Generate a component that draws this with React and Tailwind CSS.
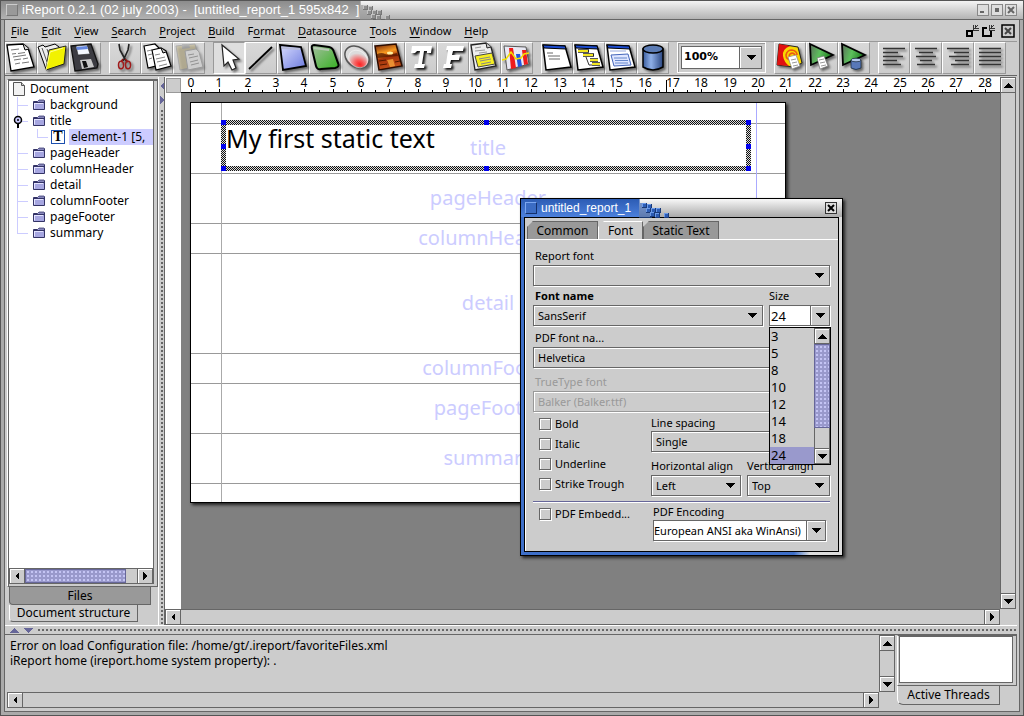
import React from "react";

const raised =
  "border border-[#666666] bg-[#cccccc] shadow-[inset_1px_1px_0_#fff]";
const comboFrame =
  "border border-[#666666] shadow-[1px_1px_0_#fff,inset_1px_1px_0_#fff]";

/* ---------- small glyphs ---------- */

const arrowPoints = {
  up: "0,6 5,1 10,6",
  down: "0,1 10,1 5,6",
};

function Arrow({ dir, fill = "#000" }) {
  if (dir === "left" || dir === "right") {
    return (
      <svg width="6" height="10" viewBox="0 0 6 10" shapeRendering="crispEdges" aria-hidden="true">
        <polygon points={dir === "left" ? "5,1 5,9 1,5" : "1,1 1,9 5,5"} fill={fill} />
      </svg>
    );
  }
  return (
    <svg width="10" height="7" viewBox="0 0 10 7" shapeRendering="crispEdges" aria-hidden="true">
      <polygon points={arrowPoints[dir]} fill={fill} />
    </svg>
  );
}

function ScrollButton({ dir }) {
  return (
    <button type="button" aria-label={"Scroll " + dir} className={"flex size-4 shrink-0 items-center justify-center " + raised}>
      <Arrow dir={dir} />
    </button>
  );
}

function TitleSquares({ light, dark, edge }) {
  return (
    <svg width="32" height="19" viewBox="0 0 32 19" shapeRendering="crispEdges" aria-hidden="true">
      <path d="M0 0h1v4h4v4h4v4h4v7h-13z" fill={dark} opacity="0.6" />
      {[[3, 4], [8, 5], [12, 9], [7, 9], [17, 9], [11, 13], [16, 14], [25, 14]].map(([x, y]) => (
        <g key={x + "-" + y}>
          <rect x={x} y={y} width="5" height="5" fill={edge} />
          <rect x={x} y={y} width="4" height="4" fill={light} />
          <rect x={x + 1} y={y + 1} width="3" height="3" fill={dark} />
        </g>
      ))}
    </svg>
  );
}

/* ---------- toolbar drawings ---------- */

const Lines = ({ d, c = "#555" }) => <path d={d} stroke={c} strokeWidth="1" fill="none" />;

const art = {
  new: (
    <>
      <polygon points="2,3 18,2 23,6 29,25 6,29" fill="#fff" stroke="#000" strokeWidth="1.3" />
      <path d="M18 2l2 6 4-1" fill="#ddd" stroke="#000" />
      <Lines d="M6 8l8-1M7 12l4-.5M13 11.500l7-1M8 15l13-2M9 18l7-1M18 17l5-1M10 22l5-1M17 21l7-1" c="#777" />
    </>
  ),
  open: (
    <>
      <polygon points="1,5 6,3 8,5 18,2 22,5 25,22 9,27" fill="#eee" stroke="#000" />
      <path d="M5 6l5 14M10 7l3 9" stroke="#555" />
      <polygon points="12,8 29,4 27,22 9,28" fill="#f2f200" stroke="#222" />
      <path d="M9 28L13 10l13-4" fill="none" stroke="#ffff90" />
    </>
  ),
  save: (
    <>
      <polygon points="2,4 22,2 29,22 28,26 6,29" fill="#3c3c42" stroke="#111" strokeWidth="1.300" />
      <polygon points="7,4 18,3 21,12 9,13" fill="#f4f8ff" stroke="#222" strokeWidth="0.6" />
      <path d="M7 5l11-1 1 3-11 1z" fill="#6688e0" />
      <polygon points="11,18 22,17 25,25 13,27" fill="#c8c8c8" />
      <polygon points="13,19 17,19 19,25 15,26" fill="#111" />
    </>
  ),
  cut: (
    <>
      <path d="M10 2l1 6 6 11M20 2l-1 6-5 11" stroke="#222" strokeWidth="1.600" fill="none" />
      <path d="M14 17l-2 3M16 17l3 3" stroke="#8f1515" strokeWidth="1.600" />
      <ellipse cx="12" cy="23" rx="2.500" ry="3.800" fill="none" stroke="#a01a1a" strokeWidth="1.500" />
      <ellipse cx="19" cy="23" rx="2.500" ry="3.800" fill="none" stroke="#a01a1a" strokeWidth="1.500" />
    </>
  ),
  copy: (
    <>
      <polygon points="3,4 14,2 18,6 22,22 7,26" fill="#fff" stroke="#000" strokeWidth="1.200" />
      <Lines d="M6 9l5-1M7 13l4-1M8 17l3-1" c="#888" />
      <polygon points="11,8 20,6 25,9 30,24 15,28" fill="#fff" stroke="#000" strokeWidth="1.200" />
      <path d="M20 6l2 5 3-1" fill="#ccc" stroke="#000" />
      <Lines d="M14 13l5-1M15 17l9-2M16 20l9-2M18 24l8-2" c="#888" />
    </>
  ),
  paste: (
    <g opacity="0.5">
      <polygon points="3,4 22,2 28,24 7,28" fill="#c4b684" stroke="#888" />
      <polygon points="9,2 16,2 17,6 9,7" fill="#999" />
      <polygon points="12,9 23,7 26,10 30,25 15,28" fill="#fff" stroke="#999" />
      <Lines d="M15 13l6-1M16 16l9-2M17 20l8-2M18 23l8-2" c="#888" />
    </g>
  ),
  pointer: <polygon points="9,3 11,24 15,20 19,28 23,26 20,18 26,17" fill="#fff" stroke="#222" strokeWidth="1.200" />,
  line: <path d="M4 27L27 5" stroke="#000" strokeWidth="1.800" />,
  rect: (
    <>
      <polygon points="3,3 24,5 29,24 6,28" fill="url(#gBlue)" stroke="#000" strokeWidth="1.800" />
      <path d="M5 6l18 1" stroke="#b8bcd8" strokeWidth="2" />
    </>
  ),
  round: (
    <>
      <path d="M5 3q-3 0-2 4l4 17q1 4 5 3l14-1q5-1 3-5l-4-11q-1-4-5-5z" fill="url(#gGreen)" stroke="#000" strokeWidth="2" />
      <path d="M5 6l15 2" stroke="#b8c8b4" strokeWidth="2" />
    </>
  ),
  ellipse: (
    <>
      <ellipse cx="16" cy="15" rx="13" ry="10" transform="rotate(35 16 15)" fill="url(#gRed)" stroke="#555" strokeWidth="1.500" />
      <ellipse cx="17" cy="17" rx="10" ry="8" transform="rotate(35 17 17)" fill="none" stroke="#fff" strokeOpacity="0.5" />
    </>
  ),
  image: (
    <>
      <polygon points="2,4 23,2 29,24 6,28" fill="url(#gSun)" stroke="#2b0c00" strokeWidth="1.500" />
      <path d="M4 12q5-2 8 0t12-1l1 3-21 2z" fill="#4a1400" opacity="0.7" />
      <ellipse cx="17" cy="11" rx="3" ry="1.500" fill="#fff0a0" />
      <path d="M14 18l6-1 2 7-5 1z" fill="#ffb040" opacity="0.7" />
      <path d="M6 19l7-1M7 23l7-1M22 20l5-1" stroke="#501800" />
    </>
  ),
  subreport: (
    <>
      <polygon points="2,3 17,1 22,5 27,24 6,28" fill="#eee" stroke="#222" strokeWidth="1.300" />
      <path d="M17 1l1 5 4-1" fill="#ccc" stroke="#222" />
      <Lines d="M6 6l6-1M6 9l10-1M10 11l8-1" c="#999" />
      <polygon points="6,14 23,11 26,22 9,25" fill="#f5ee22" stroke="#444" />
      <Lines d="M10 17l11-2M11 19l11-2M12 22l10-2" c="#888" />
    </>
  ),
  chart: (
    <>
      <polygon points="3,4 25,5 28,22 6,28" fill="#e9e9f4" stroke="#555" />
      <polygon points="8,6 12,6 15,26 10,27" fill="#ee1c1c" />
      <polygon points="15,12 19,12 21,24 17,25" fill="#2255dd" />
      <polygon points="21,8 25,8 27,22 23,23" fill="#ee1c1c" />
      <path d="M1 18l4-1 5-7 5 7 5-1 3-4 5-1" stroke="#f4df00" strokeWidth="1.500" fill="none" />
    </>
  ),
  panel: (
    <>
      <polygon points="2,3 24,4 30,25 5,28" fill="#fff" stroke="#000" strokeWidth="1.500" />
      <polygon points="2,3 24,4 25,7 3,6" fill="#1b4bd0" stroke="#000" />
      <Lines d="M6 11l6 0M7 14l12 0M8 17l11 0" c="#666" />
    </>
  ),
  tree: (
    <>
      <polygon points="2,3 24,4 30,25 5,28" fill="#fff" stroke="#000" strokeWidth="1.500" />
      <polygon points="2,3 24,4 25,7 3,6" fill="#1b4bd0" stroke="#000" />
      <path d="M5 9h11M10 13h11M17 18h8M19 22h8" stroke="#222" strokeWidth="3.600" />
      <path d="M5 9h10M10 13h10M17 18h8M19 22h8" stroke="#f2e622" strokeWidth="2.200" />
      <path d="M13 15l3 8h3" stroke="#333" fill="none" />
    </>
  ),
  form: (
    <>
      <polygon points="2,3 24,4 30,25 5,28" fill="#fff" stroke="#000" strokeWidth="1.500" />
      <polygon points="2,3 24,4 25,7 3,6" fill="#1b4bd0" stroke="#000" />
      <Lines d="M5 9h16" c="#99aadd" />
      <polygon points="6,13 23,12 26,23 9,24" fill="#dfe6ff" stroke="#4466bb" />
      <Lines d="M9 16h13M10 18.500h13M10 21h13" c="#6688cc" />
    </>
  ),
  database: (
    <>
      <path d="M6 7v18q10 6 20 0V7z" fill="url(#gDb)" stroke="#000" strokeWidth="1.500" />
      <ellipse cx="16" cy="7" rx="10" ry="4" fill="#5c7cb4" stroke="#000" strokeWidth="1.500" />
    </>
  ),
  compile: (
    <>
      <polygon points="5,2 24,5 28,21 20,25 3,23" fill="#f8d800" stroke="#222" />
      <path d="M5 2l11 2q-8 3-7 10 1 6 6 10L3 23z" fill="#e01010" />
      <path d="M17 15q-3-1-1-3 3-2 5 1 1 4-3 5-6 0-6-5 1-5 6-5 5 1 5 5" fill="none" stroke="#ee5a10" strokeWidth="1.600" />
      <polygon points="14,15 22,13 26,24 18,27" fill="#fff" stroke="#888" strokeWidth="0.700" />
      <Lines d="M17 18l5-1M18 21l5-1M19 24l5-1" c="#999" />
    </>
  ),
  run: (
    <>
      <polygon points="4,2 27,13 5,23" fill="url(#gPlay)" stroke="#000" strokeWidth="1.800" />
      <polygon points="11,16 18,14 22,24 14,27" fill="#fff" stroke="#777" strokeWidth="0.700" />
      <Lines d="M13 18l5-1M14 21l5-1M15 24l5-1" c="#999" />
    </>
  ),
  runDb: (
    <>
      <polygon points="4,2 27,13 5,23" fill="url(#gPlay)" stroke="#000" strokeWidth="1.800" />
      <path d="M13 18v8q5 3 10 0v-8z" fill="#5878b8" stroke="#123" strokeWidth="0.700" />
      <ellipse cx="18" cy="18" rx="5" ry="1.800" fill="#b4c8ec" stroke="#123" strokeWidth="0.700" />
    </>
  ),
  left: <path d="M5 6.500h22M5 10.500h15M5 14.500h20M5 18.500h14M5 22.500h18" stroke="#333" strokeWidth="1.500" />,
  center: <path d="M5 6.500h22M9 10.500h14M6 14.500h20M10 18.500h12M7 22.500h18" stroke="#333" strokeWidth="1.500" />,
  right: <path d="M5 6.500h22M12 10.500h15M7 14.500h20M13 18.500h14M9 22.500h18" stroke="#333" strokeWidth="1.500" />,
  justify: <path d="M5 6.500h22M5 10.500h22M5 14.500h22M5 18.500h22M5 22.500h22" stroke="#333" strokeWidth="1.500" />,
  text: (
    <path d="M7 4h20l-1 7h-4v-2h-3l-2 13h3l-1 4H9l1-4h3l2-13h-3l-2 2H6z" fill="#fff" />
  ),
  field: (
    <path d="M10 4h17l-1 5H16l-1 4h8l-1 5h-8l-1 4h2l-1 4H6l1-4h2l2-14H9z" fill="#fff" />
  ),
};

function Gradients() {
  return (
    <svg width="0" height="0" className="absolute" aria-hidden="true">
      <defs>
        <linearGradient id="gBlue" x2="1" y2="1"><stop stopColor="#d8dcff" /><stop offset="1" stopColor="#6a78dd" /></linearGradient>
        <linearGradient id="gGreen" x2="1" y2="1"><stop stopColor="#a5bfa0" /><stop offset="1" stopColor="#35b020" /></linearGradient>
        <radialGradient id="gRed" cx="0.75" cy="0.72" r="0.5"><stop stopColor="#ff2020" /><stop offset="0.400" stopColor="#f86060" /><stop offset="1" stopColor="#dcdcdc" /></radialGradient>
        <linearGradient id="gSun" x2="0.3" y2="1"><stop stopColor="#6b1c08" /><stop offset="0.4" stopColor="#f99a20" /><stop offset="0.6" stopColor="#a23008" /><stop offset="1" stopColor="#c2501a" /></linearGradient>
        <linearGradient id="gDb"><stop stopColor="#3a5c9c" /><stop offset="0.4" stopColor="#8fb0e8" /><stop offset="1" stopColor="#2a4680" /></linearGradient>
        <linearGradient id="gPlay" x2="1" y2="0.3"><stop stopColor="#5c6c5c" /><stop offset="0.500" stopColor="#5cc05c" /><stop offset="1" stopColor="#1e7a1e" /></linearGradient>
      </defs>
    </svg>
  );
}

function Tool({ name, label, active }) {
  const shadow =
    name === "text" || name === "field"
      ? "drop-shadow-[2px_2px_1px_rgba(0,0,0,0.9)]"
      : "drop-shadow-[2px_2px_1px_rgba(0,0,0,0.5)]";
  return (
    <button
      type="button"
      aria-label={label}
      className={
        "size-8 shrink-0 border " +
        (active
          ? "border-t-[#999999] border-l-[#999999] border-r-white border-b-white bg-[#dedede]"
          : "border-t-white border-l-white border-r-[#999999] border-b-[#999999] bg-linear-to-b from-[#d8d8d8] to-[#cccccc]")
      }
    >
      <svg viewBox="0 0 32 32" className={"-ml-px -mt-px size-8 " + shadow} aria-hidden="true">
        {art[name]}
      </svg>
    </button>
  );
}

const toolGroups = [
  [["new", "New"], ["open", "Open"], ["save", "Save"]],
  [["cut", "Cut"], ["copy", "Copy"], ["paste", "Paste"]],
  [
    ["pointer", "Select", true], ["line", "Line"], ["rect", "Rectangle"], ["round", "Round rectangle"],
    ["ellipse", "Ellipse"], ["image", "Image"], ["text", "Static text"], ["field", "Text field"],
    ["subreport", "Subreport"], ["chart", "Chart"],
  ],
  [["panel", "Properties"], ["tree", "Groups"], ["form", "Bands"], ["database", "Database"]],
];
const runTools = [["compile", "Compile"], ["run", "Run"], ["runDb", "Run with connection"]];
const alignTools = [["left", "Align left"], ["center", "Align center"], ["right", "Align right"], ["justify", "Justify"]];

function ToolGroup({ tools }) {
  return (
    <div className="flex">
      {tools.map(([name, label, active]) => (
        <Tool key={name} name={name} label={label} active={active} />
      ))}
    </div>
  );
}

function Toolbar() {
  return (
    <div className="flex h-[35px] shrink-0 items-start gap-2 border-t border-[#999999] border-b border-b-[#666666]">
      {toolGroups.map((g) => (
        <ToolGroup key={g[0][0]} tools={g} />
      ))}
      <div className="mb-0.5 flex w-[89px] shrink-0 self-stretch border border-white p-[3px] shadow-[inset_1px_1px_0_#999]">
        <input
          aria-label="Zoom"
          defaultValue="100%"
          className="min-w-0 flex-1 border border-[#666666] bg-white pl-0.5 font-['DejaVu_Sans',sans-serif] text-[11px] font-bold"
        />
        <button type="button" aria-label="Choose zoom" className={"flex w-[22px] items-center justify-center border-l-0 " + raised}>
          <Arrow dir="down" />
        </button>
      </div>
      <ToolGroup tools={runTools} />
      <ToolGroup tools={alignTools} />
    </div>
  );
}

/* ---------- window title and menu ---------- */

function TitleBar() {
  return (
    <header className="flex h-5 shrink-0 items-stretch border border-b-[#666666] border-[#555555] bg-linear-to-b from-[#f4f4f4] to-[#b4b4b4]">
      <div className="flex items-center gap-1 bg-linear-to-b from-[#8c8c8c] to-[#b2b2b2] pl-[5px]">
        <span className="size-3 border border-[#777777] border-t-[#cccccc] border-l-[#cccccc] bg-[#999999]" />
        <h1 className="whitespace-pre font-['Liberation_Sans',sans-serif] text-[13px] leading-4 text-white">
          {"iReport 0.2.1 (02 july 2003) -  [untitled_report_1 595x842  ]"}
        </h1>
      </div>
      <TitleSquares light="#c4c4c4" dark="#8e8e8e" edge="#777777" />
      <div className="ml-auto flex items-center gap-0.5 pr-1.5">
        {["Minimize", "Maximize", "Close"].map((name, i) => (
          <button key={name} type="button" aria-label={name} className="flex size-3 items-center justify-center border border-[#888888] bg-[#dddddd]">
            <svg width="8" height="8" viewBox="0 0 8 8" fill="none" stroke="#666" strokeWidth="2" aria-hidden="true">
              <path d={["M1 6h4", "M2 3h4M2 5h4", "M1 1l6 6M7 1L1 7"][i]} />
            </svg>
          </button>
        ))}
      </div>
    </header>
  );
}

const menus = [
  ["", "F", "ile"], ["", "E", "dit"], ["", "V", "iew"], ["", "S", "earch"], ["", "P", "roject"], ["", "B", "uild"],
  ["F", "o", "rmat"], ["", "D", "atasource"], ["", "T", "ools"], ["", "W", "indow"], ["", "H", "elp"],
];

function MenuBar() {
  return (
    <nav className="flex h-[21px] shrink-0 items-center gap-[13px] pl-1.5 pr-0.5">
      {menus.map(([a, b, c]) => (
        <button key={a + b + c} type="button" className="text-[11px] leading-4">
          {a}
          <span className="underline underline-offset-2">{b}</span>
          {c}
        </button>
      ))}
      <div className="ml-auto flex items-center gap-0.5">
        <button type="button" aria-label="Minimize report">
          <svg width="14" height="14" viewBox="0 0 14 14" fill="none" stroke="#000" shapeRendering="crispEdges" aria-hidden="true">
            <path d="M2 7h5v5H2z" strokeWidth="2" /><path d="M13 1L8 6M8.500 1v5h5M10.500 1v3h3" stroke="#333" />
          </svg>
        </button>
        <button type="button" aria-label="Restore report">
          <svg width="14" height="14" viewBox="0 0 14 14" fill="none" stroke="#000" shapeRendering="crispEdges" aria-hidden="true">
            <path d="M6 4H2v8h8V7" strokeWidth="2" /><path d="M13 1L8 6M8.500 1v5h5M10.500 1v3h3" stroke="#333" />
          </svg>
        </button>
        <button type="button" aria-label="Close report" className="ml-1">
          <svg width="14" height="14" viewBox="0 0 14 14" fill="none" stroke="#000" aria-hidden="true">
            <path d="M1 1h12v12H1z" strokeWidth="1.500" /><path d="M4 4l6 6M10 4l-6 6" stroke="#444" strokeWidth="2" />
          </svg>
        </button>
      </div>
    </nav>
  );
}

/* ---------- left side ---------- */

function Folder() {
  return (
    <svg width="14" height="12" viewBox="0 0 14 12" aria-hidden="true" className="shrink-0">
      <path d="M1.500 2.500h4l1-1h6v9h-11z" fill="#a6a6e0" stroke="#333366" />
      <path d="M1.500 3.500h11" stroke="#333366" />
      <path d="M7 1.500h5" stroke="#666699" strokeWidth="2" />
      <path d="M2 4.500h9M2.500 4.500v5" stroke="#e4e4ff" />
    </svg>
  );
}

const bands = ["background", "title", "pageHeader", "columnHeader", "detail", "columnFooter", "pageFooter", "summary"];

function Tree() {
  return (
    <ul className="text-[12px] leading-4">
      <li className="flex h-4 items-center gap-1 pl-[3px]">
        <svg width="14" height="16" viewBox="0 0 14 16" aria-hidden="true">
          <path d="M1.500 1.500h8l3 3v10h-11z" fill="#f2f2f2" stroke="#555" />
          <path d="M9.500 1.500v3h3" fill="#ccc" stroke="#555" />
        </svg>
        Document
      </li>
      {bands.map((b, i) => (
        <React.Fragment key={b}>
          <li className="flex h-4 items-center">
            <svg width="23" height="16" viewBox="0 0 23 16" fill="none" stroke="#ccccff" shapeRendering="crispEdges" aria-hidden="true">
              <path d={i === bands.length - 1 ? "M8.500 0v8.500h10" : "M8.500 0v16M8.500 8.500h10"} />
              {b === "title" && (
                <g shapeRendering="auto">
                  <circle cx="9" cy="7" r="3.500" fill="#ccccff" stroke="#000" strokeWidth="1.500" />
                  <circle cx="9" cy="7" r="1" fill="#000" stroke="none" />
                  <path d="M9 10v5" stroke="#000" strokeWidth="2" />
                </g>
              )}
            </svg>
            <Folder />
            <span className="pl-1">{b}</span>
          </li>
          {b === "title" && (
            <li className="flex h-4 items-center">
              <svg width="42" height="16" viewBox="0 0 42 16" fill="none" stroke="#ccccff" shapeRendering="crispEdges" className="shrink-0" aria-hidden="true">
                <path d="M8.500 0v16M28.500 0v8.500h10" />
              </svg>
              <span className="flex size-3.5 shrink-0 items-center justify-center border border-[#1c4fae] bg-white font-['Liberation_Serif',serif] text-[14px] font-bold leading-none">
                T
              </span>
              <span className="ml-1 flex-1 whitespace-nowrap bg-[#ccccff] pl-0.5">element-1 [5,</span>
            </li>
          )}
        </React.Fragment>
      ))}
    </ul>
  );
}

const thumb =
  "border border-[#666699] bg-[#9999cc] bg-[radial-gradient(#c4c4f4_1px,transparent_1px)] bg-size-[4px_4px]";

function Sidebar() {
  return (
    <aside className="flex w-[153px] shrink-0 flex-col pl-0.5 pt-0.5">
      <div className="flex min-h-0 flex-1 flex-col border border-[#666666] border-l-white pb-0.5 pr-[3px] shadow-[inset_1px_1px_0_#666]">
        <div className="ml-px mt-px flex min-h-0 flex-1 flex-col overflow-hidden border-r border-[#666666] bg-white">
          <div className="min-h-0 flex-1 overflow-hidden">
            <Tree />
          </div>
          <div className="flex h-4 shrink-0 bg-[#cccccc]">
            <ScrollButton dir="left" />
            <div className="flex flex-1 border-y border-[#666666]">
              <div className={"w-[101px] " + thumb} />
            </div>
            <ScrollButton dir="right" />
          </div>
        </div>
      </div>
      <div className="flex flex-col items-start pb-[3px] pl-0.5 text-[12px] leading-4">
        <button type="button" className="h-[18px] w-[142px] rounded-bl-sm border border-t-0 border-[#666666] bg-[#999999]">
          Files
        </button>
        <button type="button" className="h-[17px] w-[129px] rounded-bl-sm border border-t-0 border-[#666666] border-l-white">
          Document structure
        </button>
      </div>
    </aside>
  );
}

/* ---------- report canvas ---------- */

const UNIT = 28.35;

function Ruler() {
  return (
    <svg height="16" className="block w-full overflow-visible bg-white" aria-hidden="true">
      <g fill="#000" fontSize="12" fontFamily="'Noto Sans', sans-serif" textAnchor="middle">
        {Array.from({ length: 29 }, (_, i) => (
          <text key={i} x={Math.round(26 + i * UNIT)} y="10">{i}</text>
        ))}
      </g>
      <g fill="#000" shapeRendering="crispEdges">
        {Array.from({ length: 57 }, (_, i) => (
          <rect key={i} x={Math.round(26 + (i * UNIT) / 2)} y={i % 2 ? 13 : 12} width="1" height={i % 2 ? 3 : 4} />
        ))}
        <rect y="15" width="100%" height="1" />
        <rect x="501" y="3" width="1" height="12" />
      </g>
      <rect width="16" height="16" fill="#fff" />
      <rect x="1.500" y="1.500" width="14" height="14" fill="#cccccc" stroke="#999" />
    </svg>
  );
}

const pageBands = [
  ["title", "h-[50px]"], ["pageHeader", "h-[50px]"], ["columnHeader", "h-[30px]"], ["detail", "h-[100px]"],
  ["columnFooter", "h-[30px]"], ["pageFooter", "h-[50px]"], ["summary", "h-[50px]"],
];

const handles = [
  "left-0 top-0", "left-1/2 top-0 -ml-0.5", "right-0 top-0", "left-0 top-1/2 -mt-0.5", "right-0 top-1/2 -mt-0.5",
  "left-0 bottom-0", "left-1/2 bottom-0 -ml-0.5", "right-0 bottom-0",
];

function Page() {
  return (
    <div className="relative w-[596px] border border-black bg-white shadow-[2px_2px_3px_#222]">
      <div className="absolute inset-y-0 left-[30px] w-px bg-[#aaaaaa]" />
      <div className="absolute inset-y-0 left-[565px] w-px bg-[#aaaaff]" />
      <div className="absolute left-[30px] top-[17px] h-[51px] w-[530px] bg-[repeating-conic-gradient(#111_0_25%,#ddd_0_50%)] bg-size-[2px_2px] p-[5px]">
        <p className="h-full bg-white text-[25px] leading-[26px] text-black">My first static text</p>
        {handles.map((h) => (
          <span key={h} className={"absolute size-[5px] bg-[#0000ee] " + h} />
        ))}
      </div>
      <div className="h-[21px] border-b border-[#999999]" />
      {pageBands.map(([name, h]) => (
        <div key={name} className={"flex items-center justify-center border-b border-[#999999] pb-0.5 text-xl leading-7 text-[#ccccff] " + h}>
          <span className="relative">{name}</span>
        </div>
      ))}
      <div className="h-[18px]" />
    </div>
  );
}

function Canvas() {
  return (
    <section className="flex min-w-0 flex-1 flex-col border-l border-[#666666]">
      <div className="flex min-h-0 flex-1">
        <div className="flex min-w-0 flex-1 flex-col">
          <Ruler />
          <div className="flex min-h-0 flex-1 bg-white pl-4">
            <div className="min-w-0 flex-1 overflow-hidden bg-[#808080] pl-[9px] pt-[9px]">
              <Page />
            </div>
          </div>
        </div>
        <div className="flex w-4 shrink-0 flex-col bg-[#cccccc]">
          <ScrollButton dir="up" />
          <div className="flex-1 border-x border-[#666666]" />
          <ScrollButton dir="down" />
        </div>
      </div>
      <div className="flex h-4 shrink-0 pr-4">
        <ScrollButton dir="left" />
        <div className="flex-1 border-y border-[#666666]" />
        <ScrollButton dir="right" />
      </div>
    </section>
  );
}

/* ---------- bottom ---------- */

const dots = "bg-[radial-gradient(#666666_1px,transparent_1px)] bg-size-[4px_4px]";

function BottomPanel() {
  return (
    <footer className="flex h-[77px] shrink-0 gap-0.5 border-t border-[#666666] pl-0.5">
      <section className="flex min-w-0 flex-1 flex-col pb-[3px]">
        <div className="flex min-h-0 flex-1">
          <p className="min-w-0 flex-1 pl-[3px] pt-[3px] text-[12px] leading-[15px]">
            Error on load Configuration file: /home/gt/.ireport/favoriteFiles.xml
            <br />
            iReport home (ireport.home system property): .
          </p>
          <div className="flex w-4 shrink-0 flex-col">
            <ScrollButton dir="up" />
            <div className="flex-1 border-x border-[#666666]" />
            <ScrollButton dir="down" />
          </div>
        </div>
        <div className="flex h-4 shrink-0 pr-4">
          <ScrollButton dir="left" />
          <div className="flex-1 border-y border-[#666666]" />
          <ScrollButton dir="right" />
        </div>
      </section>
      <section className="flex w-[120px] shrink-0 flex-col items-start">
        <div className="h-[51px] w-full border border-[#666666] border-l-white pb-0.5 pl-px pr-[3px]">
          <div className="h-full border border-[#666666] bg-white" />
        </div>
        <button type="button" className="h-[19px] w-[103px] rounded-bl-md border border-t-0 border-[#666666] border-l-white text-[12px] leading-4">
          Active Threads
        </button>
      </section>
    </footer>
  );
}

/* ---------- element properties dialog ---------- */

function Combo({ id, options, disabled, className = "" }) {
  return (
    <div className={"relative " + className}>
      <select
        id={id}
        disabled={disabled}
        className={"block h-[21px] w-full appearance-none pl-1 text-[11px] leading-4 disabled:border-[#999999] disabled:text-[#999999] disabled:opacity-100 " + comboFrame}
      >
        {options.map((o) => (
          <option key={o}>{o}</option>
        ))}
      </select>
      <span className="pointer-events-none absolute right-1.5 top-[7px]">{!disabled && <Arrow dir="down" />}</span>
    </div>
  );
}

function EditableCombo({ id, value, inputClass }) {
  return (
    <div className="flex h-[21px] shadow-[1px_1px_0_#fff]">
      <input id={id} defaultValue={value} className={"min-w-0 flex-1 border border-r-0 border-[#666666] bg-white " + inputClass} />
      <button type="button" aria-label="Show choices" className={"flex w-5 items-center justify-center " + raised}>
        <Arrow dir="down" />
      </button>
    </div>
  );
}

function Check({ label }) {
  return (
    <label className="flex h-5 items-center gap-1">
      <input type="checkbox" className={"size-3 appearance-none bg-[#cccccc] " + comboFrame} />
      {label}
    </label>
  );
}

function Tab({ name, selected, className }) {
  return (
    <button
      type="button"
      role="tab"
      aria-selected={!!selected}
      className={
        "h-[18px] border border-b-0 text-[12px] leading-4 [clip-path:polygon(6px_0,100%_0,100%_100%,0_100%,0_6px)] " +
        (selected ? "border-white border-r-[#666666] bg-[#cccccc] " : "border-[#666666] bg-[#999999] ") +
        className
      }
    >
      {name}
    </button>
  );
}

function PropertiesDialog() {
  const label = "flex h-[19px] items-center";
  return (
    <div
      role="dialog"
      aria-label="untitled_report_1"
      className="absolute left-[520px] top-[198px] w-[323px] border border-black bg-linear-to-r from-[#3e6fc8] from-85% to-[#dddddd] to-90% shadow-[2px_2px_3px_#222]"
    >
      <header className="flex h-[18px] bg-linear-to-b from-[#f8f8f8] to-[#aaaaaa]">
        <div className="flex items-center gap-1 bg-linear-to-b from-[#2c5cb4] to-[#4c80dc] pl-1 pr-2">
          <span className="size-3 border border-[#14306c] border-t-[#7ba6f0] border-l-[#7ba6f0] bg-[#3b6cc4]" />
          <h2 className="font-['Liberation_Sans',sans-serif] text-[12px] leading-4 text-white">untitled_report_1</h2>
        </div>
        <TitleSquares light="#6c9ae8" dark="#2c5cb4" edge="#1a3a78" />
        <button type="button" aria-label="Close" className="ml-auto mr-[5px] mt-[3px] flex size-3 items-center justify-center border border-[#333333] bg-[#dddddd]">
          <svg width="8" height="8" viewBox="0 0 8 8" stroke="#000" strokeWidth="2" aria-hidden="true">
            <path d="M1 1l6 6M7 1L1 7" />
          </svg>
        </button>
      </header>
      <div className="mx-[3px] mb-[3px] border border-black bg-[#cccccc] text-[11px] leading-4">
        <div role="tablist" className="flex px-0.5 pt-[3px]">
          <Tab name="Common" className="w-[71px]" />
          <Tab name="Font" selected className="w-[45px]" />
          <Tab name="Static Text" className="w-[76px]" />
        </div>
        <div className="border-l border-t border-white pb-2.5 pl-[7px] pr-2 pt-1.5">
          <label htmlFor="report-font" className={label + " pl-0.5"}>Report font</label>
          <Combo id="report-font" options={[""]} />
          <div className="flex gap-1.5">
            <div className="flex-1">
              <label htmlFor="font-name" className={label + " pl-0.5 font-bold"}>Font name</label>
              <Combo id="font-name" options={["SansSerif"]} />
            </div>
            <div className="relative w-[61px]">
              <label htmlFor="size" className={label}>Size</label>
              <EditableCombo id="size" value="24" inputClass="pl-px text-[13px]" />
              <div className="absolute left-0 top-[41px] z-10 flex w-[62px] border border-black bg-[#cccccc]">
                <ul role="listbox" aria-label="Size" className="flex-1 text-[13px] leading-[17px]">
                  {[3, 5, 8, 10, 12, 14, 18, 24].map((n) => (
                    <li key={n} role="option" aria-selected={n === 24} className={"h-[17px] pl-px " + (n === 24 ? "bg-[#9999cc]" : "")}>
                      {n}
                    </li>
                  ))}
                </ul>
                <div className="flex w-4 flex-col">
                  <ScrollButton dir="up" />
                  <div className={"h-[84px] " + thumb} />
                  <div className="flex-1 border-x border-[#666666]" />
                  <ScrollButton dir="down" />
                </div>
              </div>
            </div>
          </div>
          <label htmlFor="pdf-font" className={label + " mt-0.5 pl-0.5"}>PDF font na...</label>
          <Combo id="pdf-font" options={["Helvetica"]} />
          <label htmlFor="tt-font" className={label + " mt-1 pl-0.5 text-[#999999]"}>TrueType font</label>
          <Combo id="tt-font" options={["Balker (Balker.ttf)"]} disabled />
          <div className="flex pl-1.5 pt-0.5">
            <div className="w-28 shrink-0">
              <Check label="Bold" />
              <Check label="Italic" />
              <Check label="Underline" />
              <Check label="Strike Trough" />
            </div>
            <div className="min-w-0 flex-1">
              <label htmlFor="spacing" className="flex h-[17px] items-center">Line spacing</label>
              <Combo id="spacing" options={["Single"]} />
              <div className="flex gap-1.5 pt-1">
                <div className="w-[90px] shrink-0 whitespace-nowrap">
                  <label htmlFor="halign" className={label}>Horizontal align</label>
                  <Combo id="halign" options={["Left"]} />
                </div>
                <div className="min-w-0 flex-1 whitespace-nowrap">
                  <label htmlFor="valign" className={label}>Vertical align</label>
                  <Combo id="valign" options={["Top"]} />
                </div>
              </div>
            </div>
          </div>
          <div className="mt-[5px] h-0.5 border-t border-[#666699] bg-white" />
          <div className="flex pl-1.5">
            <div className="w-[114px] shrink-0 pt-px">
              <Check label="PDF Embedd..." />
            </div>
            <div className="min-w-0 flex-1 pr-1">
              <label htmlFor="encoding" className="flex h-[17px] items-center">PDF Encoding</label>
              <EditableCombo id="encoding" value="European ANSI aka WinAnsi)" inputClass="text-[11px]" />
            </div>
          </div>
        </div>
      </div>
    </div>
  );
}

export default function App() {
  return (
    <div className="relative flex h-screen min-h-[600px] flex-col overflow-hidden bg-[#aaaaaa] font-['Noto_Sans',sans-serif] text-black">
      <Gradients />
      <TitleBar />
      <div className="flex min-h-0 flex-1 flex-col border-x border-b border-[#555555] px-[3px] pb-[3px]">
        <main className="flex min-h-0 flex-1 flex-col border border-t-0 border-[#666666] bg-[#cccccc] pr-0.5">
          <MenuBar />
          <Toolbar />
          <div className="flex min-h-0 flex-1 pr-px pt-px">
            <Sidebar />
            <div className="flex w-1.5 shrink-0 flex-col items-center gap-1 border-l border-white pt-1">
              <Arrow dir="left" fill="#666699" />
              <Arrow dir="right" fill="#666699" />
              <span className={"w-1 flex-1 " + dots} />
            </div>
            <Canvas />
          </div>
          <div className="flex h-[9px] shrink-0 items-center gap-1 border-t border-white pl-1">
            <Arrow dir="up" fill="#666699" />
            <Arrow dir="down" fill="#666699" />
            <span className={"h-1 flex-1 " + dots} />
          </div>
          <BottomPanel />
        </main>
      </div>
      <PropertiesDialog />
    </div>
  );
}
